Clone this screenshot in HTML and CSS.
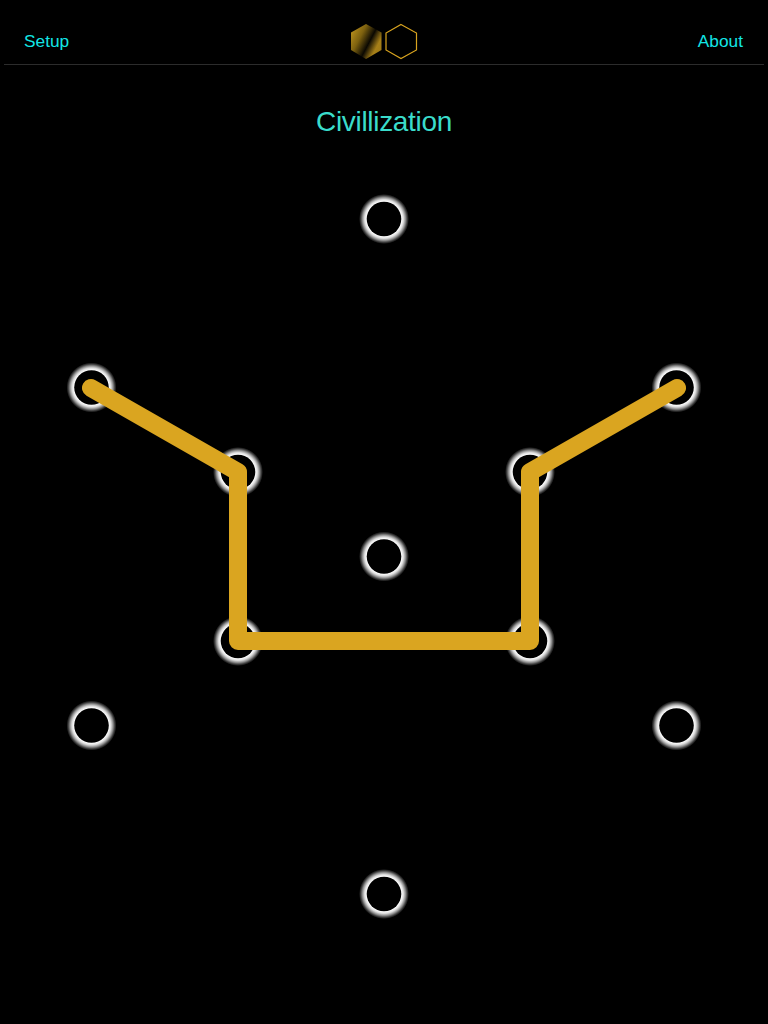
FILE: index.html
```html
<!DOCTYPE html>
<html lang="en">
<head>
<meta charset="utf-8">
<title>Civillization</title>
<link rel="stylesheet" href="styles.css">
</head>
<body>
<div class="app">
  <header class="topbar">
    <a class="navlink">Setup</a>
    <div class="hexes">
      <svg class="hex-icons" viewBox="0 0 70 38" width="70" height="38">
        <defs>
          <linearGradient id="hexfill" x1="0" y1="0.2" x2="1" y2="0.8">
            <stop offset="0" stop-color="#b98f1c"/>
            <stop offset="0.3" stop-color="#7d610f"/>
            <stop offset="0.58" stop-color="#0a0802"/>
            <stop offset="0.82" stop-color="#a67f18"/>
            <stop offset="1" stop-color="#a07a15"/>
          </linearGradient>
        </defs>
        <polygon points="18,1 33.500,9.500 33.500,27 18,36 3,27 3,9.500" fill="url(#hexfill)"/>
        <polygon points="53,1.500 68.500,10 68.500,27 53,35.500 38,27 38,10" fill="none" stroke="#d9a41f" stroke-width="1.200"/>
      </svg>
    </div>
    <a class="navlink">About</a>
  </header>
  <h1 class="title">Civillization</h1>
  <svg class="board" viewBox="0 0 768 880" width="768" height="880">
    <defs>
      <radialGradient id="glow" gradientUnits="objectBoundingBox" cx="0.5" cy="0.5" r="0.5">
        <stop offset="0" stop-color="#fff"/>
        <stop offset="0.7" stop-color="#fff"/>
        <stop offset="0.78" stop-color="#dcdcdc"/>
        <stop offset="0.86" stop-color="#909090"/>
        <stop offset="0.93" stop-color="#404040"/>
        <stop offset="1" stop-color="#000"/>
      </radialGradient>
      <g id="node">
        <circle r="25" fill="url(#glow)"/>
        <circle r="17.300" fill="#000"/>
      </g>
    </defs>
    <use href="#node" x="384" y="75"/>
    <use href="#node" x="91.500" y="243.500"/>
    <use href="#node" x="676.500" y="243.500"/>
    <use href="#node" x="238" y="328"/>
    <use href="#node" x="530" y="328"/>
    <use href="#node" x="384" y="412.500"/>
    <use href="#node" x="238" y="497"/>
    <use href="#node" x="530" y="497"/>
    <use href="#node" x="91.500" y="581.500"/>
    <use href="#node" x="676.500" y="581.500"/>
    <use href="#node" x="384" y="750"/>
    <polyline points="91,244 238,328 238,497 530,497 530,328 677,244" fill="none" stroke="#daa520" stroke-width="18" stroke-linecap="round" stroke-linejoin="round"/>
  </svg>
</div>
</body>
</html>
```
FILE: styles.css
```css
* { box-sizing: border-box; }
html, body { margin: 0; padding: 0; background: #000; }
body { font-family: "Liberation Sans", Arial, sans-serif; }
.app { width: 768px; height: 1024px; overflow: hidden; background: #000; display: flex; flex-direction: column; }
.topbar { height: 65px; margin: 0 4px; padding: 20px 21px 0 20px; display: flex; justify-content: space-between; align-items: flex-start; border-bottom: 1px solid #2c2c2c; }
.navlink { font-size: 17.300px; line-height: 20px; color: #12e6e6; margin-top: 11px; }
.hexes { display: flex; margin-top: 3px; margin-left: -1px; }
.hex-icons { display: block; }
.title { margin: 39px 0 0; text-align: center; font-size: 28px; line-height: 36px; font-weight: 400; letter-spacing: -0.32px; color: #3adccb; height: 40px; }
.board { display: block; }
```
